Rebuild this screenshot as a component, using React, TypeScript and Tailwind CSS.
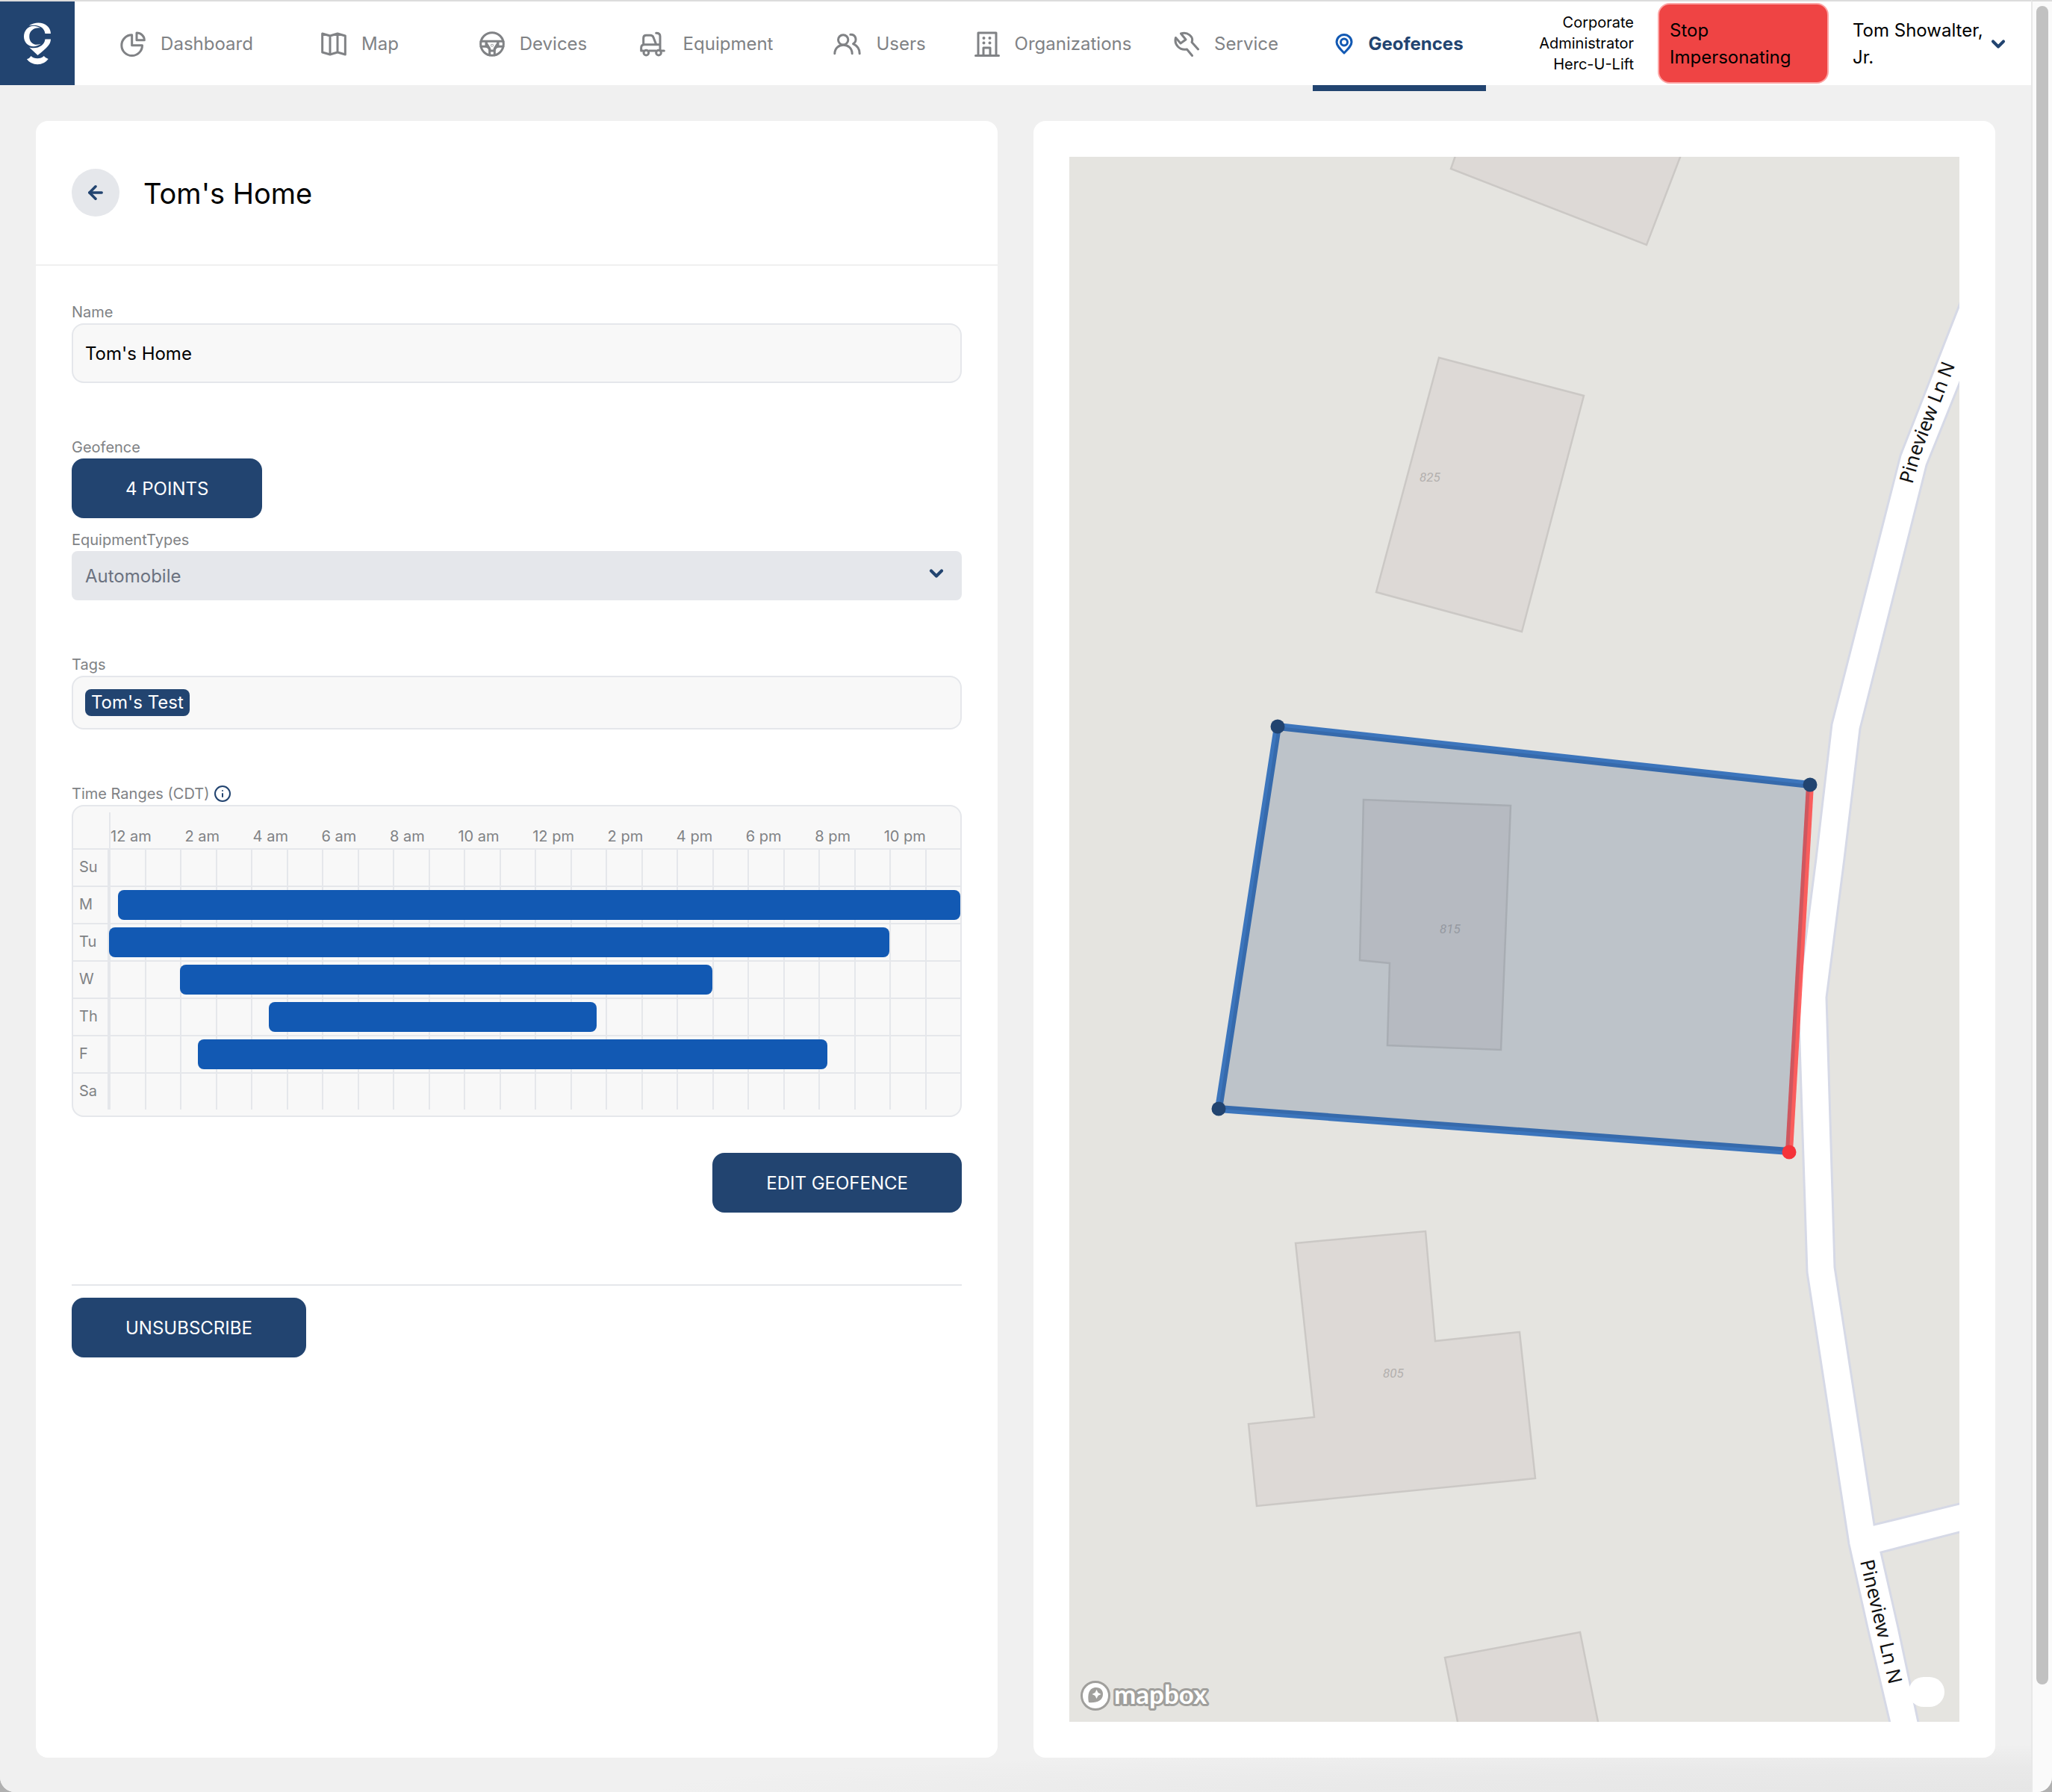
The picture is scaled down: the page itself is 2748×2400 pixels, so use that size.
import type { ReactNode } from 'react';
import { ArrowLeft, ChevronDown, Info } from 'lucide-react';

type NavItem = { label: string; icon: ReactNode; active?: boolean };

const stroke = {
  fill: 'none',
  stroke: 'currentColor',
  strokeLinecap: 'round' as const,
  strokeLinejoin: 'round' as const,
};

function Logo() {
  return (
    <svg viewBox="90 56 115 176" className="h-[59px] w-[38px]" fill="#fff" aria-hidden="true">
      <path d="M160 80C122 58 93 84 93 115c0 32 34 54 69 30-28 10-47-6-47-30s20-38 45-35z" />
      <path d="M113 71c40-26 88-7 89 32h-23c-2-22-24-40-66-32z" />
      <path d="M202 126c-1 22-14 34-53 65l-34-32c32 9 62-7 64-33z" />
      <path d="M122 194q10 10 26 10t26-10q6 8 18 12-16 22-44 22t-43-21q12-4 17-13z" />
    </svg>
  );
}

const dashboardIcon = (
  <svg viewBox="0 0 102 102" className="size-[34px]" {...stroke} strokeWidth={9}>
    <path d="M47 14.500A41.500 41.500 0 1 0 88.500 56H47z" />
    <path d="M66 6a31 29 0 0 1 31 29H66z" />
  </svg>
);

const mapIcon = (
  <svg viewBox="0 0 102 102" className="size-[34px]" {...stroke} strokeWidth={9}>
    <path d="M5 9l31 9 30-9 31 9v75l-31-9-30 9-31-9zM36 18v75M66 9v75" />
  </svg>
);

const devicesIcon = (
  <svg viewBox="0 0 102 102" className="size-[34px]" {...stroke} strokeWidth={9}>
    <circle cx="51" cy="51" r="46" />
    <path d="M6 40h90M6 61h17c12 0 18 8 18 18v16M96 61H79c-12 0-18 8-18 18v16M27 42c1 16 14 16 16 36h16c2-20 15-20 16-36M27 42v18M75 42v18" />
    <circle cx="51" cy="56" r="1" />
  </svg>
);

const equipmentIcon = (
  <svg viewBox="0 0 114 102" className="h-[34px] w-[38px]" {...stroke} strokeWidth={9}>
    <path d="M14 52V27q0-11 11-11h17q9 0 12 8l11 28M65 7q16 0 16 13v54M81 53H18Q5 53 5 66v12h9M36 78h28M86 78h11" />
    <circle cx="25" cy="86" r="10" />
    <circle cx="75" cy="86" r="10" />
  </svg>
);

const usersIcon = (
  <svg viewBox="0 0 110 102" className="h-[34px] w-[37px]" {...stroke} strokeWidth={9}>
    <circle cx="39" cy="34" r="20" />
    <path d="M5 89c1-46 69-46 70 0M68 13c23-1 29 26 11 37 17 8 26 22 26 39" />
  </svg>
);

const organizationsIcon = (
  <svg viewBox="0 0 34 34" className="size-[34px]" {...stroke} strokeWidth={3}>
    <path d="M5 32V2h24v30M1.500 32.500h31M12 32V22h9v10" />
    <path d="M12.500 9h.01M20.500 9h.01M12.500 15.500h.01M20.500 15.500h.01" strokeWidth={4} />
  </svg>
);

const serviceIcon = (
  <svg viewBox="0 0 34 34" className="size-[34px]" {...stroke} strokeWidth={3}>
    <path d="M24.500 32.500l-7-8.500C8 26 0 18 2.500 8.500L9 16l7-5-6.500-8C18 0 27 7 24 14.500l8.500 9.500" />
  </svg>
);

const geofencesIcon = (
  <svg viewBox="0 0 24 28" className="h-[28px] w-[24px] text-[#1259b3]" {...stroke} strokeWidth={3}>
    <path d="M12 26C6 20 2 16 2 11.500a10 10 0 0 1 20 0C22 16 18 20 12 26z" />
    <circle cx="12" cy="11.500" r="4.500" />
  </svg>
);

const navItems: NavItem[] = [
  { label: 'Dashboard', icon: dashboardIcon },
  { label: 'Map', icon: mapIcon },
  { label: 'Devices', icon: devicesIcon },
  { label: 'Equipment', icon: equipmentIcon },
  { label: 'Users', icon: usersIcon },
  { label: 'Organizations', icon: organizationsIcon },
  { label: 'Service', icon: serviceIcon },
  { label: 'Geofences', icon: geofencesIcon, active: true },
];

function Header() {
  return (
    <header className="flex h-[114px] shrink-0 border-t-2 border-[#dcdcdc] bg-white">
      <a href="#home" aria-label="Home" className="flex w-[100px] shrink-0 items-center justify-center bg-[#224470]">
        <Logo />
      </a>
      <nav className="ml-[34px] grid min-w-0 flex-1 grid-cols-8">
        {navItems.map((item) =>
          item.active ? (
            <a
              key={item.label}
              href="#geofences"
              aria-current="page"
              className="relative flex items-center justify-center gap-5 pt-0.5 font-bold text-[#224470] after:absolute after:inset-x-0 after:top-full after:h-2 after:bg-[#224470]"
            >
              {item.icon}
              {item.label}
            </a>
          ) : (
            <a
              key={item.label}
              href={'#' + item.label.toLowerCase()}
              className="flex items-center justify-center gap-5 pt-0.5 text-[#808285]"
            >
              {item.icon}
              {item.label}
            </a>
          ),
        )}
      </nav>
      <div className="flex w-[730px] shrink-0 items-center justify-end gap-8 pr-[30px]">
        <p className="w-[160px] text-right text-[20px] leading-[28px]">Corporate Administrator Herc-U-Lift</p>
        <button
          type="button"
          className="h-[108px] w-[229px] rounded-2xl border-2 border-[#fca5a5] bg-[#ef4444] px-3.5 pt-0.5 text-left leading-[36px]"
        >
          Stop Impersonating
        </button>
        <button type="button" className="flex w-[209px] items-center justify-between pt-0.5 text-left leading-[36px]">
          <span className="w-[176px]">Tom Showalter, Jr.</span>
          <ChevronDown className="size-7 shrink-0 text-[#224470]" strokeWidth={3.5} />
        </button>
      </div>
    </header>
  );
}

const labelClass = 'text-[20px] leading-[30px] text-[#808285]';
const primaryButton = 'h-20 rounded-2xl bg-[#224470] px-[72px] pt-0.5 text-white';

const hourLabels = ['12 am', '2 am', '4 am', '6 am', '8 am', '10 am', '12 pm', '2 pm', '4 pm', '6 pm', '8 pm', '10 pm'];

const schedule: { day: string; from?: number; to?: number }[] = [
  { day: 'Su' },
  { day: 'M', from: 0.25, to: 24 },
  { day: 'Tu', from: 0, to: 22 },
  { day: 'W', from: 2, to: 17 },
  { day: 'Th', from: 4.5, to: 13.75 },
  { day: 'F', from: 2.5, to: 20.25 },
  { day: 'Sa' },
];

const hours = Array.from({ length: 24 }, (_, i) => i);

function TimeRanges() {
  return (
    <div className="rounded-2xl border-2 border-[#e5e7eb] bg-[#f8f8f8] py-2 text-[20px] leading-[28px] text-[#808285]">
      <div className="flex h-[50px] border-b-2 border-[#e5e7eb] pl-12">
        <div className="flex flex-1 items-end justify-between border-l-2 border-[#e5e7eb] pr-[46px] pb-0.5">
          {hourLabels.map((h) => (
            <span key={h}>{h}</span>
          ))}
        </div>
      </div>
      {schedule.map(({ day, from, to }) => (
        <div key={day} className="flex h-[50px] border-b-2 border-[#e5e7eb] last:h-12 last:border-b-0">
          <div className="flex w-12 items-center border-r-2 border-[#e5e7eb] pb-0.5 pl-2">{day}</div>
          <div className="relative grid flex-1 grid-cols-24">
            {hours.map((h) => (
              <span key={h} className="border-l-2 border-[#e5e7eb]" />
            ))}
            {from !== undefined && to !== undefined && (
              <div
                className="absolute top-1 h-10 rounded-lg bg-[#1259b3]"
                style={{ left: `${(from / 24) * 100}%`, width: `${((to - from) / 24) * 100}%` }}
              />
            )}
          </div>
        </div>
      ))}
    </div>
  );
}

function DetailsCard() {
  return (
    <section className="rounded-2xl bg-white">
      <div className="flex h-[194px] items-center gap-8 border-b-2 border-[#f0f0f0] px-12">
        <button type="button" aria-label="Back" className="flex size-16 items-center justify-center rounded-full bg-[#e5e7eb]">
          <ArrowLeft className="size-7 text-[#224470]" strokeWidth={3} />
        </button>
        <h1 className="pt-0.5 text-[38px] leading-[48px]">Tom's Home</h1>
      </div>
      <form className="flex flex-col px-12 pt-[47px]" onSubmit={(e) => e.preventDefault()}>
        <label htmlFor="name" className={labelClass}>
          Name
        </label>
        <input
          id="name"
          type="text"
          defaultValue="Tom's Home"
          className="h-20 rounded-2xl border-2 border-[#e5e7eb] bg-[#f8f8f8] px-4"
        />

        <label htmlFor="points" className={`mt-[71px] ${labelClass}`}>
          Geofence
        </label>
        <button id="points" type="button" className={`self-start ${primaryButton}`}>
          4 POINTS
        </button>

        <label htmlFor="types" className={`mt-3.5 ${labelClass}`}>
          EquipmentTypes
        </label>
        <div className="relative">
          <select
            id="types"
            disabled
            className="block h-[66px] w-full appearance-none rounded-lg bg-[#e5e7eb] px-[18px] pt-0.5 text-[#6b7280] opacity-100"
          >
            <option>Automobile</option>
          </select>
          <ChevronDown className="absolute top-4 right-5 size-7 text-[#224470]" strokeWidth={3.5} />
        </div>

        <span className={`mt-[71px] ${labelClass}`}>Tags</span>
        <div className="flex h-[72px] items-center rounded-2xl border-2 border-[#e5e7eb] bg-[#f8f8f8] px-4">
          <span className="rounded-lg bg-[#224470] px-2 leading-[36px] text-white">Tom's Test</span>
        </div>

        <div className={`mt-[71px] flex items-center gap-1.5 ${labelClass}`}>
          Time Ranges (CDT)
          <Info className="size-6 text-[#224470]" />
        </div>
        <TimeRanges />

        <button type="button" className={`mt-12 self-end ${primaryButton}`}>
          EDIT GEOFENCE
        </button>
        <div className="mt-24 flex border-t-2 border-[#e5e7eb] py-4">
          <button type="button" className={primaryButton}>
            UNSUBSCRIBE
          </button>
        </div>
      </form>
    </section>
  );
}

function MapCanvas() {
  return (
    <svg viewBox="0 0 1192 2096" preserveAspectRatio="xMidYMid slice" className="absolute inset-0 size-full" role="img" aria-label="Map of Pineview Ln N">
      <rect width="1192" height="2096" fill="#e5e4e0" />

      <g fill="#ddd9d6" stroke="#cbc8c5" strokeWidth="2.5">
        <path d="M520-10L511 16l262 102L822-10z" />
        <path d="M495 269l194 51-83 316-195-53z" />
        <path d="M394 861l197 8-13 327-152-6 3-110-40-4z" />
        <path d="M303 1455l174-16 13 147 113-12 21 196-373 37-11-110 88-9z" />
        <path d="M503 2010l181-34 26 130H522z" />
      </g>

      <path
        d="M1200 178L1113 400 1021 760 1000 940 976 1126 988 1494 1044 1858 1069 1970 1101 2106H1139L1110 1970 1087 1869 1200 1840V1802L1078 1832 1025 1487 1014 1126 1038 940 1059 766 1148 413 1200 284z"
        fill="#fff"
        stroke="#d6d9e6"
        strokeWidth="3"
      />

      <g fill="#b3b0ae" fontFamily="Roboto, sans-serif" fontStyle="italic" fontSize="17" textAnchor="middle">
        <text x="483" y="435">825</text>
        <text x="510" y="1040">815</text>
        <text x="434" y="1635">805</text>
      </g>

      <defs>
        <path id="road-north" d="M1129 439L1138 407Q1141 396 1145 386L1197 251" />
        <path id="road-south" d="M1059 1881L1110 2099" />
      </defs>
      <g fill="#111" fontFamily="'Noto Sans', sans-serif" fontSize="26">
        <text>
          <textPath href="#road-north">Pineview Ln N</textPath>
        </text>
        <text>
          <textPath href="#road-south">Pineview Ln N</textPath>
        </text>
      </g>

      <path d="M992 841L279 763 200 1275 964 1332" fill="none" stroke="#1259b3" strokeOpacity="0.8" strokeWidth="10" strokeLinejoin="round" />
      <path d="M992 841L964 1332" stroke="#ff3b3b" strokeOpacity="0.8" strokeWidth="10" />
      <path d="M279 763L992 841 964 1332 200 1275z" fill="#204270" fillOpacity="0.2" />
      <g fill="#224470">
        <circle cx="279" cy="763" r="9.500" />
        <circle cx="992" cy="841" r="9.500" />
        <circle cx="200" cy="1275" r="9.500" />
        <circle cx="964" cy="1333" r="9.500" fill="#f5333a" />
      </g>
    </svg>
  );
}

function MapboxLogo() {
  return (
    <a href="#mapbox" aria-label="Mapbox" className="absolute bottom-1.5 left-3">
      <svg viewBox="0 -6 190 58" className="h-[58px] w-[190px]">
        <circle cx="23" cy="23" r="18.500" fill="#fff" stroke="#a09f9c" strokeWidth="3" />
        <path d="M14 32c-2-10 0-20 10-20 6 0 9 4 9 9 0 9-9 12-19 11z" fill="#a09f9c" />
        <path d="M24.500 15l2 4 4 2-4 2-2 4-2-4-4-2 4-2z" fill="#fff" />
        <text
          x="48"
          y="34"
          fill="#fff"
          stroke="#a09f9c"
          strokeWidth="6"
          strokeLinejoin="round"
          paintOrder="stroke"
          fontFamily="Lato, sans-serif"
          fontWeight="700"
          fontSize="35"
        >
          mapbox
        </text>
      </svg>
    </a>
  );
}

function MapCard() {
  return (
    <section className="flex rounded-2xl bg-white p-12">
      <div className="relative flex-1 overflow-hidden">
        <MapCanvas />
        <MapboxLogo />
        <button type="button" aria-label="Toggle attribution" className="absolute right-5 bottom-5 h-10 w-12 rounded-full bg-white" />
      </div>
    </section>
  );
}

export default function App() {
  return (
    <div className="bg-[#b0b0b0]">
      <div className="flex min-h-screen overflow-hidden rounded-b-[20px] bg-[#f0f0f0] font-['Inter',sans-serif] text-[24px] leading-[36px] text-black">
        <div className="flex min-w-0 flex-1 flex-col">
          <Header />
          <main className="grid flex-1 grid-cols-2 gap-12 bg-[radial-gradient(ellipse_68%_64px_at_100%_100%,#e6e6e6,#e9e9e9_50%,#f0f0f0)] px-12 pt-12 pb-[46px]">
            <DetailsCard />
            <MapCard />
          </main>
        </div>
        <div aria-hidden="true" className="w-7 shrink-0 border-t-2 border-l-2 border-t-[#dcdcdc] border-l-[#e8e8e8] bg-[#fafafa] px-[5px] pt-1.5">
          <div className="flex h-full flex-col">
            <div className="basis-[94%] rounded-full bg-[#c1c1c1]" />
          </div>
        </div>
      </div>
    </div>
  );
}
